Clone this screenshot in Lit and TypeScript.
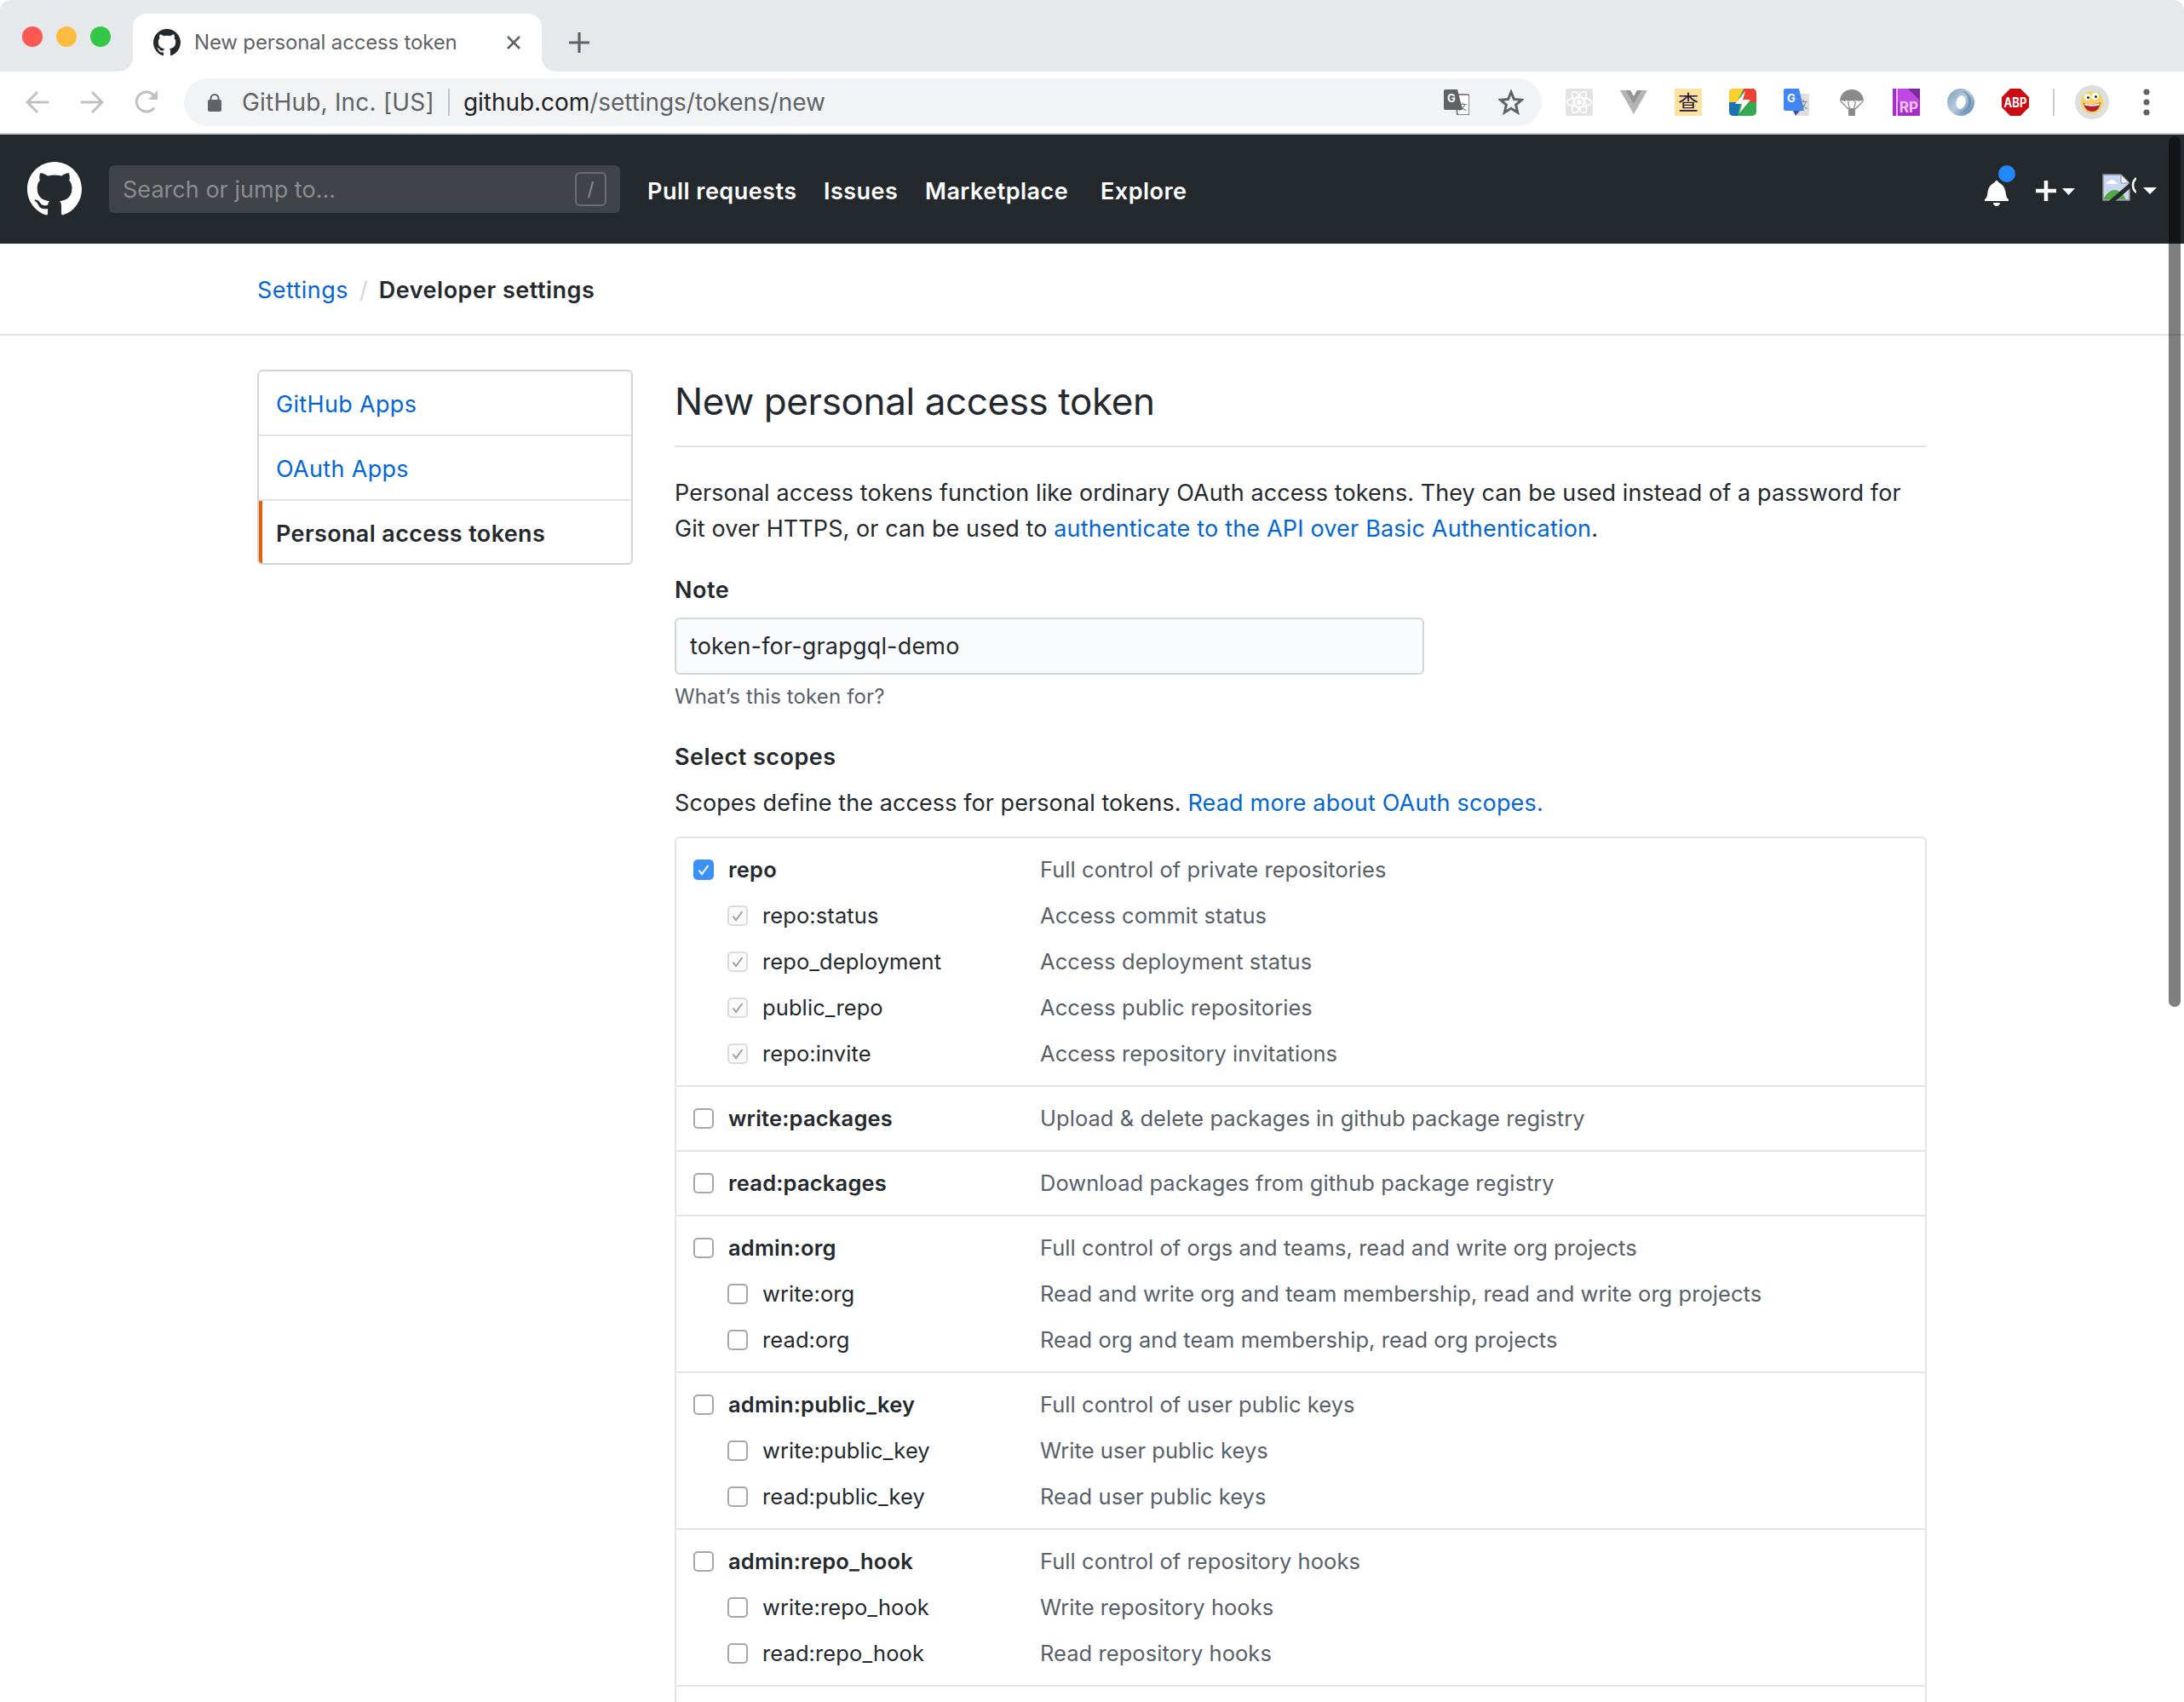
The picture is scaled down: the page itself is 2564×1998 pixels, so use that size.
import { LitElement, html, css, svg } from "lit";
import { customElement } from "lit/decorators.js";

const MARK = "M8 0C3.58 0 0 3.58 0 8c0 3.54 2.29 6.53 5.47 7.59.4.07.55-.17.55-.38 0-.19-.01-.82-.01-1.49-2.01.37-2.53-.49-2.69-.94-.09-.23-.48-.94-.82-1.13-.28-.15-.68-.52-.01-.53.63-.01 1.08.58 1.23.82.72 1.21 1.87.87 2.33.66.07-.52.28-.87.51-1.07-1.78-.2-3.64-.89-3.64-3.95 0-.87.31-1.59.82-2.15-.08-.2-.36-1.02.08-2.12 0 0 .67-.21 2.2.82.64-.18 1.32-.27 2-.27.68 0 1.36.09 2 .27 1.53-1.04 2.2-.82 2.2-.82.44 1.1.16 1.92.08 2.12.51.56.82 1.27.82 2.15 0 3.07-1.87 3.75-3.65 3.95.29.25.54.73.54 1.48 0 1.07-.01 1.93-.01 2.2 0 .21.15.46.55.38A8.013 8.013 0 0016 8c0-4.42-3.58-8-8-8z";

type Scope = { n: string; d: string; state?: "checked" | "disabled" };
type Group = { main: Scope; subs: Scope[] };

const GROUPS: Group[] = [
  { main: { n: "repo", d: "Full control of private repositories", state: "checked" }, subs: [
    { n: "repo:status", d: "Access commit status", state: "disabled" },
    { n: "repo_deployment", d: "Access deployment status", state: "disabled" },
    { n: "public_repo", d: "Access public repositories", state: "disabled" },
    { n: "repo:invite", d: "Access repository invitations", state: "disabled" },
  ] },
  { main: { n: "write:packages", d: "Upload & delete packages in github package registry" }, subs: [] },
  { main: { n: "read:packages", d: "Download packages from github package registry" }, subs: [] },
  { main: { n: "admin:org", d: "Full control of orgs and teams, read and write org projects" }, subs: [
    { n: "write:org", d: "Read and write org and team membership, read and write org projects" },
    { n: "read:org", d: "Read org and team membership, read org projects" },
  ] },
  { main: { n: "admin:public_key", d: "Full control of user public keys" }, subs: [
    { n: "write:public_key", d: "Write user public keys" },
    { n: "read:public_key", d: "Read user public keys" },
  ] },
  { main: { n: "admin:repo_hook", d: "Full control of repository hooks" }, subs: [
    { n: "write:repo_hook", d: "Write repository hooks" },
    { n: "read:repo_hook", d: "Read repository hooks" },
  ] },
];

const EXT = [
  svg`<rect width="32" height="32" rx="2" fill="#e3e3e3"/><g fill="none" stroke="#fff" stroke-width="1.6"><ellipse cx="16" cy="16" rx="14" ry="5.5"/><ellipse cx="16" cy="16" rx="14" ry="5.5" transform="rotate(60 16 16)"/><ellipse cx="16" cy="16" rx="14" ry="5.5" transform="rotate(120 16 16)"/></g><circle cx="16" cy="16" r="3" fill="#fff"/>`,
  svg`<path d="M0 2h11l5 9 5-9h11L16 30z" fill="#b4b4b4"/><path d="M7 2h5l4 7 4-7h5L16 18z" fill="#949494"/>`,
  svg`<rect width="32" height="32" fill="#fbe29e"/><text x="16" y="25" text-anchor="middle" font-size="24" font-family="Noto Sans CJK SC, sans-serif" fill="#2c1a3c">查</text>`,
  svg`<rect width="32" height="32" rx="5" fill="#34a853"/><path d="M0 5a5 5 0 015-5h12L9 16H0z" fill="#fbd030"/><path d="M17 0h10a5 5 0 015 5v11H15z" fill="#ea4335"/><path d="M0 16h13l-3 16H5a5 5 0 01-5-5z" fill="#1a73b8"/><path d="M19 3L7 18h8l-3 11 13-16h-9z" fill="#fff"/>`,
  svg`<path d="M14 6h14a2 2 0 012 2v22a2 2 0 01-2 2H16z" fill="#dfdfdf"/><path d="M2 0h16l6 26H2a2 2 0 01-2-2V2a2 2 0 012-2z" fill="#4285f4"/><path d="M11 26h8l-5 6z" fill="#3a4fb4"/><text x="9" y="16" text-anchor="middle" font-size="13" font-weight="700" font-family="Inter, sans-serif" fill="#fff">G</text><text x="23" y="23" text-anchor="middle" font-size="11" font-family="Noto Sans CJK SC, sans-serif" fill="#5f7d8a">文</text>`,
  svg`<path d="M2 15C2 7 8 1 16 1s14 6 14 14c-2-1.500-4-1.500-5.500 0-2-1.500-4-1.500-6 0-1.500-1.500-3.500-1.500-5 0-2-1.500-4-1.500-6 0C5 13.500 3.500 13.500 2 15z" fill="#8a8a8a"/><path d="M3 15l9 9M29 15l-9 9M11.500 15l2 9M20.500 15l-2 9" stroke="#8a8a8a" stroke-width="1.300" fill="none"/><rect x="12" y="23" width="8" height="9" rx="1" fill="#8a8a8a"/>`,
  svg`<rect width="32" height="32" fill="#a52fc4"/><path d="M5 0h27v14L18 26 5 14z" fill="#c046e6"/><path d="M18 0h14v14z" fill="#7d2a9c"/><rect x="4" width="2" height="32" fill="#e9b8f5"/><text x="19" y="28" text-anchor="middle" font-size="17" font-weight="700" font-family="Inter, sans-serif" fill="#f3c6fb">RP</text>`,
  svg`<defs><linearGradient id="rg" x1="0" y1="0" x2="1" y2="1"><stop offset="0" stop-color="#7c9cbd"/><stop offset=".5" stop-color="#b6cbde"/><stop offset="1" stop-color="#4d7aa3"/></linearGradient></defs><circle cx="16" cy="16" r="16" fill="url(#rg)"/><path d="M17 3C24 3 29 9 28 16c-1 7-7 13-13 13 6-2 10-7 10-13 0-6-3-11-8-13z" fill="#5d87ad" opacity=".7"/><ellipse cx="16" cy="16" rx="5.500" ry="8" fill="#fff" transform="rotate(12 16 16)"/>`,
  svg`<path d="M10 0h12l10 10v12L22 32H10L0 22V10z" fill="#c90c14"/><text x="16" y="22" text-anchor="middle" font-size="15.500" font-weight="700" font-family="Inter, sans-serif" textLength="27" lengthAdjust="spacingAndGlyphs" fill="#fff">ABP</text>`,
];

@customElement("app-root")
export class AppRoot extends LitElement {
  static styles = css`
    :host { display: block; position: relative; width: 2564px; height: 1998px; overflow: hidden; background: #fff; color: #24292e; font-family: Inter, "Liberation Sans", sans-serif; font-size: 27px; line-height: 42px; letter-spacing: 0.08px; }
    svg { display: block; flex: none; }
    a { color: #0366d6; text-decoration: none; }

    .strip { display: flex; height: 84px; background: #e6e9ec; border-radius: 12px 12px 0 0; padding-top: 16px; box-sizing: border-box; }
    .lights { display: flex; gap: 16px; padding: 15px 0 0 26px; width: 156px; box-sizing: border-box; flex: none; }
    .light { width: 24px; height: 24px; border-radius: 50%; }
    .tab { position: relative; display: flex; align-items: center; width: 480px; height: 68px; background: #fff; border-radius: 16px 16px 0 0; padding: 0 24px 1px 24px; box-sizing: border-box; flex: none; }
    .tab::before, .tab::after { content: ""; position: absolute; bottom: 0; width: 16px; height: 16px; }
    .tab::before { left: -16px; background: radial-gradient(circle at 0 0, transparent 15.5px, #fff 16px); }
    .tab::after { right: -16px; background: radial-gradient(circle at 100% 0, transparent 15.5px, #fff 16px); }
    .tab-title { font-size: 24px; line-height: 32px; color: #5f6368; margin-left: 16px; flex: 1; letter-spacing: -0.17px; white-space: nowrap; }
    .newtab { margin: 22px 0 0 32px; }

    .toolbar { display: flex; align-items: center; height: 72px; padding: 0 0 0 30px; background: #fff; border-bottom: 2px solid #c8c9cb; }
    .nav-btns { display: flex; gap: 36px; width: 186px; flex: none; }
    .omni { display: flex; align-items: center; width: 1594px; height: 56px; border-radius: 28px; background: #f1f3f4; padding: 0 21px 0 28px; box-sizing: border-box; flex: none; }
    .omni .org { font-size: 28px; line-height: 36px; color: #5f6368; margin-left: 24px; letter-spacing: 0.2px; white-space: nowrap; }
    .omni .sep { width: 2px; height: 32px; background: #c2c4c7; margin: 0 16px 0 16px; flex: none; }
    .omni .url { font-size: 28px; line-height: 36px; color: #202124; flex: 1; letter-spacing: -0.05px; white-space: nowrap; }
    .omni .url span { color: #5f6368; }
    .omni .btns { display: flex; align-items: center; gap: 34px; }
    .exts { display: flex; gap: 32px; margin-left: 28px; align-items: center; }
    .tb-sep { width: 2px; height: 32px; background: #cfcfcf; margin-left: 28px; flex: none; }
    .avatar { margin-left: 24px; }
    .dots { margin-left: 40px; }

    .gh { display: flex; align-items: center; height: 128px; background: #24292e; padding: 0 0 0 32px; box-sizing: border-box; }
    .gh-logo { margin-right: 32px; }
    .search { display: flex; align-items: center; justify-content: space-between; width: 600px; height: 56px; background: #404448; border-radius: 6px; padding: 0 16px; box-sizing: border-box; color: #8a8d90; flex: none; }
    .search .ph { letter-spacing: 0.03px; white-space: nowrap; padding-top: 2px; }
    .slash { display: flex; align-items: center; justify-content: center; width: 37px; height: 40px; border: 2px solid #6a6e72; border-radius: 6px; box-sizing: border-box; font-size: 22px; }
    .gh-nav { display: flex; margin-left: 32px; padding-top: 5px; font-weight: 600; color: #fff; letter-spacing: 0.48px; white-space: nowrap; }
    .gh-nav span:nth-child(1) { width: 207px; }
    .gh-nav span:nth-child(2) { width: 119px; }
    .gh-nav span:nth-child(3) { width: 206px; }
    .gh-right { display: flex; align-items: flex-start; margin-left: auto; height: 128px; padding-right: 32px; box-sizing: border-box; }
    .bell { position: relative; margin-top: 52px; width: 28px; }
    .bell i { position: absolute; left: 16px; top: -16px; width: 20px; height: 20px; border-radius: 50%; background: #2188ff; }
    .plus { margin: 54px 0 0 32px; }
    .caret { width: 0; height: 0; border: 8px solid transparent; border-top: 8px solid #fff; border-bottom: 0; flex: none; margin-top: 62px; }
    .broken { margin: 46px 8px 0 32px; }

    .crumbs { display: flex; align-items: center; height: 102px; padding: 4px 0 0 302px; border-bottom: 2px solid #e1e4e8; }
    .crumbs a { letter-spacing: 0.45px; }
    .crumbs i { font-style: normal; color: #d1d5da; margin: 0 13px; font-weight: 400; }
    .crumbs b { font-weight: 600; letter-spacing: 0.5px; }
    .content { display: flex; align-items: flex-start; padding: 40px 0 0 302px; gap: 49px; }
    .side { width: 441px; flex: none; border: 2px solid #d1d5da; border-radius: 6px; box-sizing: border-box; background: #fff; overflow: hidden; }
    .side div { height: 76px; line-height: 77px; padding-left: 20px; box-sizing: border-box; border-bottom: 2px solid #e1e4e8; letter-spacing: 0.33px; white-space: nowrap; }
    .side div:last-child { border-bottom: 0; height: 73px; line-height: 78px; }
    .side .on { border-left: 4px solid #e36209; padding-left: 16px; font-weight: 600; letter-spacing: 0.36px; }

    .main { width: 1470px; flex: none; }
    h2 { margin: 0; font-size: 44px; line-height: 72px; font-weight: 400; padding: 1px 0 16px; border-bottom: 2px solid #e1e4e8; letter-spacing: -0.4px; white-space: nowrap; }
    .main p { margin: 33px 0 0; }
    .main p a { letter-spacing: 0.18px; }
    .lbl { margin: 30px 0 0; font-weight: 600; letter-spacing: 0.48px; }
    .input { display: flex; align-items: center; margin-top: 11px; width: 880px; height: 67px; padding: 0 16px; box-sizing: border-box; border: 2px solid #d1d5da; border-radius: 6px; background: #fafbfc; letter-spacing: 0.18px; }
    .hint { margin-top: 8px; font-size: 24px; line-height: 36px; color: #586069; letter-spacing: 0.13px; }
    .sel { margin: 32px 0 0; font-weight: 600; letter-spacing: 0.48px; }
    .main p.scopes-p { margin-top: 12px; }

    .box { margin-top: 18px; border: 2px solid #e1e4e8; border-radius: 6px 6px 0 0; height: 1100px; box-sizing: border-box; font-size: 25.5px; }
    .group { display: flex; flex-direction: column; gap: 12px; padding: 16px 0; border-bottom: 2px solid #e1e4e8; }
    .row { display: grid; grid-template-columns: 407px 1fr; padding-left: 20px; }
    .name { display: flex; align-items: center; gap: 17px; white-space: nowrap; letter-spacing: 0.1px; }
    .main-row .name { font-weight: 600; letter-spacing: 0.2px; }
    .sub .name { padding-left: 40px; }
    .desc { color: #586069; white-space: nowrap; letter-spacing: 0.05px; }
    .cb { width: 24px; height: 24px; box-sizing: border-box; border-radius: 5px; border: 2px solid #a8a8a8; background: #fff; display: flex; align-items: center; justify-content: center; flex: none; }
    .cb.checked { background: #3b91f7; border-color: #3b91f7; }
    .cb.disabled { background: #fafafa; border-color: #dcdcdc; }

    .thumb { position: absolute; left: 2546px; top: 160px; width: 14px; height: 1022px; border-radius: 7px; background: rgba(0, 0, 0, 0.5); }
  `;

  private cb(state?: string) {
    const stroke = state === "checked" ? "#fff" : "#a0a0a0";
    return html`<span class="cb ${state ?? ""}">${state
      ? svg`<svg width="16" height="16" viewBox="0 0 16 16"><path d="M2.500 8.500l3.500 4.500L13.500 3" fill="none" stroke="${stroke}" stroke-width="2"/></svg>`
      : ""}</span>`;
  }

  private scopeRow(s: Scope, cls: string) {
    return html`<div class="row ${cls}"><div class="name">${this.cb(s.state)}<span>${s.n}</span></div><div class="desc">${s.d}</div></div>`;
  }

  render() {
    return html`
      <div class="strip">
        <div class="lights">
          <span class="light" style="background:#fc5753"></span>
          <span class="light" style="background:#fdbc40"></span>
          <span class="light" style="background:#33c748"></span>
        </div>
        <div class="tab">
          <svg width="32" height="32" viewBox="0 0 16 16"><path d="${MARK}" fill="#24292e"/></svg>
          <span class="tab-title">New personal access token</span>
          <svg width="18" height="18" viewBox="0 0 18 18"><path d="M2 2l14 14M16 2L2 16" stroke="#5f6368" stroke-width="2.600"/></svg>
        </div>
        <svg class="newtab" width="24" height="24" viewBox="0 0 24 24"><path d="M12 0v24M0 12h24" stroke="#5f6368" stroke-width="3.200"/></svg>
      </div>

      <div class="toolbar">
        <div class="nav-btns">
          <svg width="28" height="28" viewBox="0 0 28 28"><path d="M27 14H3M14 2L2 14l12 12" fill="none" stroke="#c1c1c1" stroke-width="3"/></svg>
          <svg width="28" height="28" viewBox="0 0 28 28"><path d="M1 14h24M14 2l12 12-12 12" fill="none" stroke="#c1c1c1" stroke-width="3"/></svg>
          <svg width="28" height="28" viewBox="0 0 28 28"><path d="M23 20.500A11.500 11.500 0 1 1 22.500 6" fill="none" stroke="#c1c1c1" stroke-width="3"/><path d="M27 0v11H16z" fill="#c1c1c1"/></svg>
        </div>
        <div class="omni">
          <svg width="16" height="22" viewBox="0 0 16 22"><path d="M3.500 9V6.500a4.500 4.500 0 019 0V9" fill="none" stroke="#5f6368" stroke-width="2"/><rect y="8" width="16" height="14" rx="2" fill="#5f6368"/></svg>
          <span class="org">GitHub, Inc. [US]</span>
          <span class="sep"></span>
          <span class="url">github.com<span>/settings/tokens/new</span></span>
          <div class="btns">
            <svg width="30" height="30" viewBox="0 0 30 30">
              <path d="M13 6h15a2 2 0 012 2v20a2 2 0 01-2 2H16z" fill="#fff" stroke="#5f6368" stroke-width="1.500"/>
              <path d="M2 0h14l6 24H2a2 2 0 01-2-2V2a2 2 0 012-2z" fill="#5f6368"/>
              <text x="9" y="15" text-anchor="middle" font-size="13" font-weight="700" font-family="Inter, sans-serif" fill="#fff">G</text>
              <text x="22" y="24" text-anchor="middle" font-size="10" font-family="Noto Sans CJK SC, sans-serif" fill="#5f6368">文</text>
            </svg>
            <svg width="30" height="30" viewBox="0 0 30 30"><path d="M15 3l3.500 8.500 9 .7-6.900 5.900 2.100 8.900L15 22.200l-7.700 4.800 2.100-8.900L2.500 12.200l9-.7z" fill="none" stroke="#5f6368" stroke-width="3" stroke-linejoin="miter"/></svg>
          </div>
        </div>
        <div class="exts">
          ${EXT.map((e) => html`<svg width="32" height="32" viewBox="0 0 32 32">${e}</svg>`)}
        </div>
        <span class="tb-sep"></span>
        <svg class="avatar" width="40" height="40" viewBox="0 0 40 40">
          <circle cx="20" cy="20" r="20" fill="#dedede"/>
          <circle cx="20" cy="20" r="13" fill="#f4d35e"/>
          <circle cx="14.500" cy="14" r="3.800" fill="#fff"/><circle cx="23.500" cy="13" r="4.300" fill="#fff"/>
          <circle cx="15.500" cy="14.500" r="1.500" fill="#222"/><circle cx="24.500" cy="13.500" r="1.500" fill="#222"/>
          <path d="M10 21c5 2 15 2 20-1-1 8-5 11-10 11s-9-4-10-10z" fill="#b8202a"/>
          <path d="M11 21.500c5 1.500 13 1.500 18-.5l-.5 2.500c-5 1.500-12 1.500-17 0z" fill="#fff"/>
        </svg>
        <svg class="dots" width="8" height="32" viewBox="0 0 8 32"><circle cx="4" cy="4" r="3.500" fill="#5f6368"/><circle cx="4" cy="16" r="3.500" fill="#5f6368"/><circle cx="4" cy="28" r="3.500" fill="#5f6368"/></svg>
      </div>

      <div class="gh">
        <svg class="gh-logo" width="64" height="64" viewBox="0 0 16 16"><path d="${MARK}" fill="#fff"/></svg>
        <div class="search"><span class="ph">Search or jump to...</span><span class="slash">/</span></div>
        <div class="gh-nav"><span>Pull requests</span><span>Issues</span><span>Marketplace</span><span>Explore</span></div>
        <div class="gh-right">
          <div class="bell">
            <svg width="28" height="32" viewBox="0 0 14 16"><path d="M14 12v1H0v-1l.73-.58c.77-.77.81-2.550 1.190-4.420C2.690 3.230 6 2 6 2c0-.55.45-1 1-1s1 .45 1 1c0 0 3.390 1.230 4.160 5 .38 1.880.42 3.660 1.190 4.420l.66.58H14zm-7 4c1.110 0 2-.89 2-2H5c0 1.110.89 2 2 2z" fill="#fff"/></svg>
            <i></i>
          </div>
          <svg class="plus" width="46" height="24" viewBox="0 0 46 24"><path d="M12 0v24M0 12h24" stroke="#fff" stroke-width="4.500"/><path d="M31 9h15l-7.500 8z" fill="#fff"/></svg>
          <svg class="broken" width="40" height="32" viewBox="0 0 40 32">
            <path d="M1 1h21l10 10v20H1z" fill="#c9d8f2" stroke="#8e9096" stroke-width="1.500"/>
            <path d="M22 1v10h10z" fill="#f2f2f2" stroke="#8e9096" stroke-width="1"/>
            <path d="M1.500 30c3-7 8-11 13-11s10 4 13 11z" fill="#55a745"/>
            <path d="M5 12a3 3 0 013-3 4 4 0 017 .5c2 0 3 1 3 2.500z" fill="#fff"/>
            <path d="M36 11L8 35" stroke="#24292e" stroke-width="5"/>
            <path d="M40 5a11 11 0 000 17" stroke="#fff" stroke-width="2.500" fill="none"/>
          </svg>
          <span class="caret"></span>
        </div>
      </div>

      <div class="crumbs"><a href="#">Settings</a><i>/</i><b>Developer settings</b></div>

      <div class="content">
        <div class="side">
          <div><a href="#">GitHub Apps</a></div>
          <div><a href="#">OAuth Apps</a></div>
          <div class="on">Personal access tokens</div>
        </div>
        <div class="main">
          <h2>New personal access token</h2>
          <p>Personal access tokens function like ordinary OAuth access tokens. They can be used instead of a password for<br />Git over HTTPS, or can be used to <a href="#">authenticate to the API over Basic Authentication</a>.</p>
          <div class="lbl">Note</div>
          <div class="input">token-for-grapgql-demo</div>
          <div class="hint">What’s this token for?</div>
          <div class="sel">Select scopes</div>
          <p class="scopes-p">Scopes define the access for personal tokens. <a href="#">Read more about OAuth scopes.</a></p>
          <div class="box">
            ${GROUPS.map((g) => html`<div class="group">${this.scopeRow(g.main, "main-row")}${g.subs.map((s) => this.scopeRow(s, "sub"))}</div>`)}
          </div>
        </div>
      </div>
      <div class="thumb"></div>
    `;
  }
}
